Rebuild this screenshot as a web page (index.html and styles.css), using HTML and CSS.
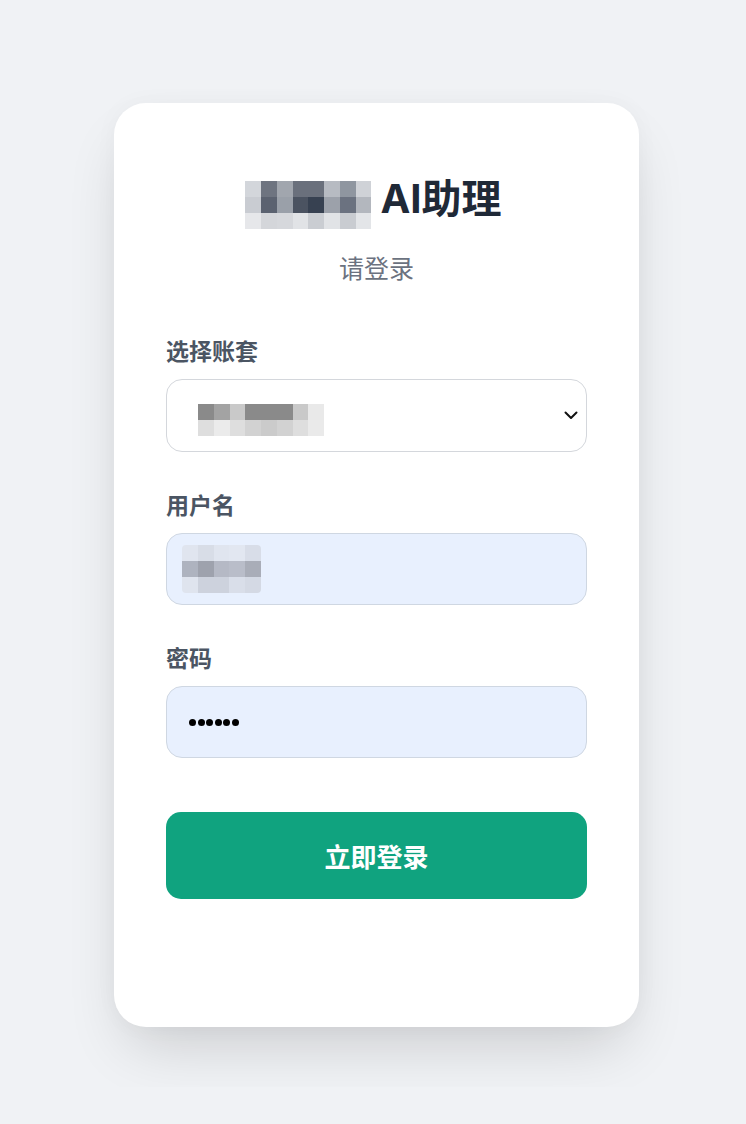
FILE: index.html
```html
<!DOCTYPE html>
<html lang="zh-CN">
<head>
<meta charset="utf-8">
<title>AI助理 - 登录</title>
<link rel="stylesheet" href="styles.css">
</head>
<body>
<div class="page">
  <div class="card">
    <div class="title">
      <div class="mosaic mosaic-title">
        <i></i><i></i><i></i><i></i><i></i><i></i><i></i><i></i>
        <i></i><i></i><i></i><i></i><i></i><i></i><i></i><i></i>
        <i></i><i></i><i></i><i></i><i></i><i></i><i></i><i></i>
      </div>
      <h1 class="title-text">AI助理</h1>
    </div>
    <p class="subtitle">请登录</p>

    <form class="form">
      <div class="field">
        <label class="label">选择账套</label>
        <div class="select">
          <div class="mosaic mosaic-select">
            <i></i><i></i><i></i><i></i><i></i><i></i><i></i><i></i>
            <i></i><i></i><i></i><i></i><i></i><i></i><i></i><i></i>
          </div>
          <svg class="chevron" width="14" height="9" viewBox="0 0 14 9"><polyline points="1.5,1.5 7,7 12.5,1.5" fill="none" stroke="#111" stroke-width="2" stroke-linecap="round" stroke-linejoin="round"/></svg>
        </div>
      </div>

      <div class="field">
        <label class="label">用户名</label>
        <div class="input input-user">
          <div class="mosaic mosaic-user">
            <i></i><i></i><i></i><i></i><i></i>
            <i></i><i></i><i></i><i></i><i></i>
            <i></i><i></i><i></i><i></i><i></i>
          </div>
        </div>
      </div>

      <div class="field">
        <label class="label">密码</label>
        <div class="input input-pass">
          <div class="dots"><i></i><i></i><i></i><i></i><i></i><i></i></div>
        </div>
      </div>

      <button type="button" class="submit">立即登录</button>
    </form>
  </div>
</div>
</body>
</html>
```
FILE: styles.css
```css
* { box-sizing: border-box; }
html, body { margin: 0; padding: 0; }
body {
  background: #f0f2f5;
  font-family: "Inter", "Noto Sans CJK SC", sans-serif;
}
.page {
  display: flex;
  justify-content: center;
  padding: 103px 0 60px 7px;
}
.card {
  width: 525px;
  background: #ffffff;
  border-radius: 32px;
  padding: 72px 52px 128px;
  box-shadow: 0 30px 60px -14px rgba(0, 0, 0, 0.16), 0 0 24px rgba(0, 0, 0, 0.03);
}
.title {
  display: flex;
  justify-content: center;
  align-items: flex-start;
  gap: 9px;
  height: 48px;
  padding-right: 6px;
}
.title-text {
  margin: 0;
  font-size: 40px;
  line-height: 48px;
  font-weight: 700;
  color: #1f2937;
  font-family: "Inter", "Noto Sans CJK SC", sans-serif;
}
.subtitle {
  margin: 28px 0 0;
  text-align: center;
  font-size: 25px;
  line-height: 32px;
  color: #6b7280;
  font-family: "Noto Sans CJK SC", sans-serif;
}
.form {
  margin-top: 52px;
  display: flex;
  flex-direction: column;
}
.field {
  display: flex;
  flex-direction: column;
  margin-bottom: 37px;
}
.field:last-of-type { margin-bottom: 54px; }
.label {
  font-size: 23px;
  line-height: 30px;
  font-weight: 700;
  color: #4b5563;
  margin-bottom: 14px;
  font-family: "Noto Sans CJK SC", sans-serif;
}
.select {
  height: 73px;
  border: 1px solid #d4d7dc;
  border-radius: 16px;
  background: #fff;
  display: flex;
  align-items: center;
  justify-content: space-between;
  padding: 0 8px 0 31px;
}
.input {
  height: 72px;
  border: 1px solid #cfd7e2;
  border-radius: 16px;
  background: #e8f0fe;
  display: flex;
  align-items: center;
}
.input-user { padding-left: 15px; }
.input-pass { padding-left: 22px; }

.mosaic { display: grid; }
.mosaic i { display: block; }
.mosaic-title {
  grid-template-columns: repeat(8, 15.75px);
  grid-auto-rows: 16px;
  margin-top: 6px;
}
.mosaic-select {
  grid-template-columns: repeat(8, 15.75px);
  grid-auto-rows: 16px;
  margin-top: 9px;
}
.mosaic-user {
  grid-template-columns: repeat(5, 15.75px);
  grid-auto-rows: 15.75px;
  border-radius: 4px;
  overflow: hidden;
}

/* title mosaic */
.mosaic-title i:nth-child(1) { background: #d3d6db; }
.mosaic-title i:nth-child(2) { background: #6e7480; }
.mosaic-title i:nth-child(3) { background: #a1a6ae; }
.mosaic-title i:nth-child(4) { background: #6a707c; }
.mosaic-title i:nth-child(5) { background: #6a707c; }
.mosaic-title i:nth-child(6) { background: #b7bbc2; }
.mosaic-title i:nth-child(7) { background: #8f96a0; }
.mosaic-title i:nth-child(8) { background: #cfd2d7; }
.mosaic-title i:nth-child(9) { background: #c9ccd2; }
.mosaic-title i:nth-child(10) { background: #5b6270; }
.mosaic-title i:nth-child(11) { background: #9aa0a9; }
.mosaic-title i:nth-child(12) { background: #4b5361; }
.mosaic-title i:nth-child(13) { background: #374151; }
.mosaic-title i:nth-child(14) { background: #9ca1aa; }
.mosaic-title i:nth-child(15) { background: #6b7280; }
.mosaic-title i:nth-child(16) { background: #b3b7be; }
.mosaic-title i:nth-child(17) { background: #e6e7ea; }
.mosaic-title i:nth-child(18) { background: #d4d6da; }
.mosaic-title i:nth-child(19) { background: #d6d8dc; }
.mosaic-title i:nth-child(20) { background: #e1e3e6; }
.mosaic-title i:nth-child(21) { background: #cacdd2; }
.mosaic-title i:nth-child(22) { background: #e1e3e6; }
.mosaic-title i:nth-child(23) { background: #c9ccd1; }
.mosaic-title i:nth-child(24) { background: #e3e5e8; }

/* select mosaic */
.mosaic-select i:nth-child(1) { background: #8a8a8a; }
.mosaic-select i:nth-child(2) { background: #a3a3a3; }
.mosaic-select i:nth-child(3) { background: #c9c9c9; }
.mosaic-select i:nth-child(4) { background: #8a8a8a; }
.mosaic-select i:nth-child(5) { background: #8a8a8a; }
.mosaic-select i:nth-child(6) { background: #8a8a8a; }
.mosaic-select i:nth-child(7) { background: #c9c9c9; }
.mosaic-select i:nth-child(8) { background: #e9e9e9; }
.mosaic-select i:nth-child(9) { background: #dedede; }
.mosaic-select i:nth-child(10) { background: #ebebeb; }
.mosaic-select i:nth-child(11) { background: #dedede; }
.mosaic-select i:nth-child(12) { background: #d2d2d2; }
.mosaic-select i:nth-child(13) { background: #cbcbcb; }
.mosaic-select i:nth-child(14) { background: #d2d2d2; }
.mosaic-select i:nth-child(15) { background: #dedede; }
.mosaic-select i:nth-child(16) { background: #eaeaea; }

/* user mosaic */
.mosaic-user i:nth-child(1) { background: #e0e5ef; }
.mosaic-user i:nth-child(2) { background: #d8dde7; }
.mosaic-user i:nth-child(3) { background: #e0e5ef; }
.mosaic-user i:nth-child(4) { background: #e2e7f1; }
.mosaic-user i:nth-child(5) { background: #d8dde8; }
.mosaic-user i:nth-child(6) { background: #aeb3bf; }
.mosaic-user i:nth-child(7) { background: #9ea2ad; }
.mosaic-user i:nth-child(8) { background: #b5b9c5; }
.mosaic-user i:nth-child(9) { background: #b9bdc9; }
.mosaic-user i:nth-child(10) { background: #a9adb8; }
.mosaic-user i:nth-child(11) { background: #dfe4ee; }
.mosaic-user i:nth-child(12) { background: #cdd2dd; }
.mosaic-user i:nth-child(13) { background: #cdd2dd; }
.mosaic-user i:nth-child(14) { background: #d9dee9; }
.mosaic-user i:nth-child(15) { background: #d4d9e4; }

.chevron { display: block; }

.dots {
  display: flex;
  gap: 1.6px;
}
.dots i {
  display: block;
  width: 7px;
  height: 7px;
  border-radius: 50%;
  background: #000;
}

.submit {
  height: 87px;
  border: none;
  border-radius: 15px;
  background: #10a37f;
  color: #ffffff;
  font-size: 26px;
  font-weight: 700;
  font-family: "Noto Sans CJK SC", sans-serif;
  cursor: pointer;
  padding: 0;
}
```
